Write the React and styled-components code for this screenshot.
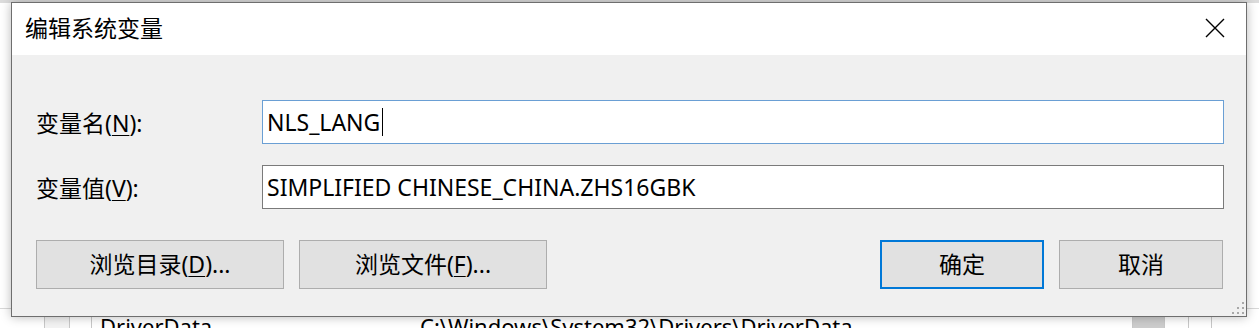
import styled, { createGlobalStyle } from "styled-components";

const GlobalStyle = createGlobalStyle`
  html, body {
    margin: 0;
    padding: 0;
    background: #ffffff;
    overflow: hidden;
  }
  * {
    box-sizing: border-box;
  }
`;

const FONT = `"Noto Sans", "Noto Sans CJK SC", sans-serif`;

const Desktop = styled.div`
  position: relative;
  width: 1259px;
  height: 328px;
  overflow: hidden;
  background: #ffffff;
  font-family: ${FONT};
`;

const BackWindow = styled.div`
  display: flex;
  flex-direction: column;
  height: 100%;
`;

const BackStrip = styled.div`
  height: 3px;
  background: #dcdcdc;
`;

const BackFill = styled.div`
  flex: 1;
`;

const BackRow = styled.div`
  display: flex;
  height: 20px;
  overflow: visible;
  border-top: 1px solid #d8d8d8;
`;

const BackCell = styled.div`
  width: ${(p) => p.$w}px;
  flex: ${(p) => (p.$grow ? 1 : "none")};
  border-right: ${(p) => (p.$line ? "1px solid #c8c8c8" : "none")};
  background: ${(p) => p.$bg || "transparent"};
  padding: 2px 0 0 ${(p) => p.$pad || 0}px;
  font-size: 22px;
  line-height: 30px;
  color: #000;
  white-space: nowrap;
`;

const Dialog = styled.div`
  position: absolute;
  left: 11px;
  top: 2px;
  width: 1236px;
  height: 315px;
  display: flex;
  flex-direction: column;
  border: 1px solid #6e6e6e;
  background: #f0f0f0;
  box-shadow: 0 0 10px rgba(0, 0, 0, 0.28);
`;

const TitleBar = styled.div`
  height: 52px;
  flex: none;
  display: flex;
  align-items: center;
  justify-content: space-between;
  padding: 0 19px 0 13px;
  background: #ffffff;
`;

const Title = styled.div`
  font-size: 23px;
  color: #000;
  padding-bottom: 4px;
`;

const CloseButton = styled.button`
  width: 24px;
  height: 24px;
  padding: 0;
  border: none;
  background: transparent;
  display: flex;
  align-items: center;
  justify-content: center;
  margin-bottom: 2px;
`;

const Body = styled.div`
  position: relative;
  flex: 1;
  display: flex;
  flex-direction: column;
  padding: 45px 22px 0 24px;
`;

const FieldRow = styled.div`
  display: flex;
  align-items: center;
  margin-bottom: 21px;
`;

const Label = styled.div`
  width: 226px;
  flex: none;
  font-size: 23px;
  color: #000;
`;

const Key = styled.u`
  text-decoration: underline;
  text-underline-offset: 3px;
  text-decoration-thickness: 1px;
`;

const TextBox = styled.div`
  flex: 1;
  height: 44px;
  display: flex;
  align-items: center;
  padding-left: 4px;
  background: #ffffff;
  border: 1px solid ${(p) => (p.$focused ? "#6a9fd4" : "#7a7a7a")};
  font-size: 23px;
  color: #000;
  white-space: nowrap;
`;

const Caret = styled.span`
  display: inline-block;
  width: 1px;
  height: 28px;
  margin-left: 2px;
  background: #000;
`;

const ButtonRow = styled.div`
  display: flex;
  gap: 15px;
  margin-top: 10px;
  padding-right: 1px;
`;

const Spacer = styled.div`
  flex: 1;
`;

const Button = styled.button`
  width: ${(p) => p.$w}px;
  height: 49px;
  padding: 0 0 3px;
  font-family: ${FONT};
  font-size: 23px;
  color: #000;
  background: #e1e1e1;
  border: ${(p) => (p.$primary ? "2px solid #0078d7" : "1px solid #adadad")};
`;

const Grip = styled.div`
  position: absolute;
  right: 2px;
  bottom: 2px;
  display: grid;
  grid-template-columns: repeat(3, 2px);
  grid-template-rows: repeat(3, 2px);
  gap: 3px;
`;

const Dot = styled.span`
  width: 2px;
  height: 2px;
  background: ${(p) => (p.$on ? "#a8a8a8" : "transparent")};
`;

const gripMap = [0, 0, 1, 0, 1, 1, 1, 1, 1];

export default function App() {
  return (
    <>
      <GlobalStyle />
      <Desktop>
        <BackWindow>
          <BackStrip />
          <BackFill />
          <BackRow>
            <BackCell $w={45} $line />
            <BackCell $w={25} $line $bg="#f3f3f3" />
            <BackCell $w={22} $line />
            <BackCell $w={328} $pad={8}>
              DriverData
            </BackCell>
            <BackCell $w={713} $line>
              C:\Windows\System32\Drivers\DriverData
            </BackCell>
            <BackCell $w={32} $line $bg="#cdcdcd" />
            <BackCell $w={24} $line />
            <BackCell $w={23} $line />
            <BackCell $grow />
          </BackRow>
        </BackWindow>

        <Dialog>
          <TitleBar>
            <Title>编辑系统变量</Title>
            <CloseButton aria-label="关闭">
              <svg width="20" height="20" viewBox="0 0 20 20">
                <path d="M1 1 L19 19 M19 1 L1 19" stroke="#000" strokeWidth="1.4" fill="none" />
              </svg>
            </CloseButton>
          </TitleBar>
          <Body>
            <FieldRow>
              <Label>
                变量名(<Key>N</Key>):
              </Label>
              <TextBox $focused>
                NLS_LANG
                <Caret />
              </TextBox>
            </FieldRow>
            <FieldRow>
              <Label>
                变量值(<Key>V</Key>):
              </Label>
              <TextBox>SIMPLIFIED CHINESE_CHINA.ZHS16GBK</TextBox>
            </FieldRow>
            <ButtonRow>
              <Button $w={248}>
                浏览目录(<Key>D</Key>)...
              </Button>
              <Button $w={248}>
                浏览文件(<Key>F</Key>)...
              </Button>
              <Spacer />
              <Button $w={164} $primary>
                确定
              </Button>
              <Button $w={164}>取消</Button>
            </ButtonRow>
            <Grip>
              {gripMap.map((on, i) => (
                <Dot key={i} $on={on} />
              ))}
            </Grip>
          </Body>
        </Dialog>
      </Desktop>
    </>
  );
}
